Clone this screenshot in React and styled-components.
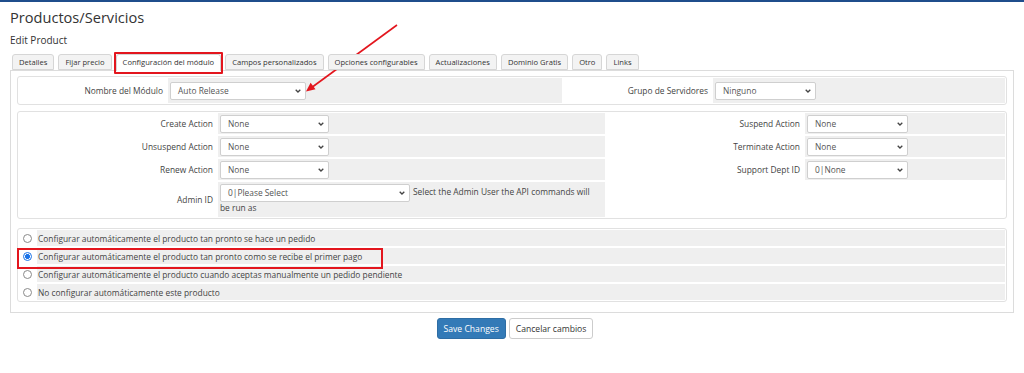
import styled, { createGlobalStyle } from "styled-components";

const GlobalStyle = createGlobalStyle`
  html, body {
    margin: 0;
    padding: 0;
    background: #fff;
  }
  body {
    font-family: "Open Sans", "Liberation Sans", sans-serif;
    color: #333;
  }
`;

const Page = styled.div`
  position: relative;
  width: 1024px;
  height: 373px;
  overflow: hidden;
  box-sizing: border-box;
  border-top: 2px solid #1f4d8c;
  padding: 0 10px;
`;

const Title = styled.h1`
  margin: 0;
  padding-top: 6px;
  font-size: 14.6px;
  font-weight: 400;
  line-height: 18px;
  color: #333;
`;

const SubTitle = styled.h2`
  margin: 7px 0 0;
  font-size: 10px;
  font-weight: 400;
  line-height: 14px;
  color: #333;
`;

const TabList = styled.div`
  display: flex;
  gap: 4px;
  margin-top: 7px;
  padding-left: 2px;
  height: 16px;
  align-items: flex-end;
`;

const Tab = styled.div`
  position: relative;
  box-sizing: border-box;
  height: ${(p) => (p.$active ? "17px" : "16px")};
  margin-bottom: ${(p) => (p.$active ? "-1px" : "0")};
  padding: 0 6px;
  border: 1px solid #d6d6d6;
  border-bottom: ${(p) => (p.$active ? "none" : "1px solid #d6d6d6")};
  border-radius: 3px 3px 0 0;
  background: ${(p) => (p.$active ? "#fff" : "#f3f3f3")};
  font-size: 7.6px;
  line-height: 15px;
  color: #333;
  white-space: nowrap;
  z-index: 1;
`;

const TabMark = styled.span`
  position: absolute;
  top: -3px;
  left: -3px;
  right: -3px;
  bottom: -3px;
  border: 2px solid #e3161e;
  border-radius: 1px;
`;

const Panel = styled.div`
  border: 1px solid #dcdcdc;
  padding: 5px 6px 10px;
`;

const FormBox = styled.div`
  position: relative;
  display: grid;
  grid-template-columns: ${(p) => p.$cols};
  grid-auto-rows: ${(p) => p.$row || "auto"};
  gap: 2px;
  border: 1px solid #e1e1e1;
  border-radius: 3px;
  padding: 1px;
  margin-top: ${(p) => p.$top || "0"};
`;

const Label = styled.div`
  display: flex;
  align-items: center;
  justify-content: flex-end;
  height: ${(p) => p.$h || "auto"};
  padding-right: 3px;
  background: #fff;
  font-size: 8.4px;
  color: #444;
  white-space: nowrap;
`;

const Field = styled.div`
  display: flex;
  align-items: ${(p) => (p.$wrap ? "flex-start" : "center")};
  padding: ${(p) => (p.$wrap ? "2px 2px 0" : "0 2px")};
  background: ${(p) => (p.$empty ? "#fff" : "#efefef")};
  font-size: 8.4px;
  color: #444;
`;

const WrapText = styled.div`
  line-height: 12px;
  font-size: 8.4px;
  color: #444;
`;

const SelectBox = styled.span`
  display: inline-flex;
  align-items: center;
  justify-content: space-between;
  box-sizing: border-box;
  width: ${(p) => p.$w}px;
  height: 18px;
  padding: 0 4px 0 7px;
  margin-right: 3px;
  border: 1px solid #cfcfcf;
  border-radius: 2px;
  background: #fff;
  font-size: 8.4px;
  color: #555;
  vertical-align: middle;
  white-space: nowrap;
`;

const Chevron = () => (
  <svg width="6" height="4" viewBox="0 0 6 4">
    <path d="M0.7 0.7 L3 3 L5.3 0.7" fill="none" stroke="#444" strokeWidth="1.3" />
  </svg>
);

const Select = ({ w, children }) => (
  <SelectBox $w={w}>
    {children}
    <Chevron />
  </SelectBox>
);

const RadioCell = styled.div`
  display: flex;
  align-items: center;
  justify-content: center;
  background: #fff;
`;

const Radio = styled.span`
  box-sizing: border-box;
  width: 9px;
  height: 9px;
  border-radius: 50%;
  border: 1px solid ${(p) => (p.$checked ? "#1a73e8" : "#8a8a8a")};
  background: ${(p) =>
    p.$checked
      ? "radial-gradient(circle, #1a73e8 0 2.2px, #fff 2.6px)"
      : "#fff"};
`;

const RadioText = styled.div`
  display: flex;
  align-items: center;
  padding-left: 1px;
  background: #efefef;
  font-size: 8.4px;
  color: #444;
  white-space: nowrap;
`;

const RowMark = styled.span`
  position: absolute;
  left: -1px;
  top: 19px;
  width: 366px;
  height: 21px;
  box-sizing: border-box;
  border: 2px solid #e3161e;
`;

const Actions = styled.div`
  display: flex;
  justify-content: center;
  gap: 3px;
  margin-top: 5px;
  padding-left: 6px;
`;

const Button = styled.button`
  box-sizing: border-box;
  height: 21px;
  padding: 0 6px;
  border-radius: 3px;
  border: 1px solid ${(p) => (p.$primary ? "#2e6da4" : "#cccccc")};
  background: ${(p) => (p.$primary ? "#337ab7" : "#fff")};
  color: ${(p) => (p.$primary ? "#fff" : "#333")};
  font-family: "Open Sans", "Liberation Sans", sans-serif;
  font-size: 8.6px;
`;

const Overlay = styled.svg`
  position: absolute;
  top: 0;
  left: 0;
  pointer-events: none;
`;

const tabs = [
  "Detalles",
  "Fijar precio",
  "Configuración del módulo",
  "Campos personalizados",
  "Opciones configurables",
  "Actualizaciones",
  "Dominio Gratis",
  "Otro",
  "Links",
];

const options = [
  "Configurar automáticamente el producto tan pronto se hace un pedido",
  "Configurar automáticamente el producto tan pronto como se recibe el primer pago",
  "Configurar automáticamente el producto cuando aceptas manualmente un pedido pendiente",
  "No configurar automáticamente este producto",
];

export default function App() {
  return (
    <>
      <GlobalStyle />
      <Page>
        <Title>Productos/Servicios</Title>
        <SubTitle>Edit Product</SubTitle>

        <TabList>
          {tabs.map((t, i) => (
            <Tab key={t} $active={i === 2}>
              {t}
              {i === 2 && <TabMark />}
            </Tab>
          ))}
        </TabList>

        <Panel>
          <FormBox $cols="147px 394px 147px 1fr" $row="25px">
            <Label>Nombre del Módulo</Label>
            <Field>
              <Select w={136}>Auto Release</Select>
            </Field>
            <Label>Grupo de Servidores</Label>
            <Field>
              <Select w={101}>Ninguno</Select>
            </Field>
          </FormBox>

          <FormBox $cols="197px 387px 196px 1fr" $top="6px">
            <Label $h="21px">Create Action</Label>
            <Field>
              <Select w={109}>None</Select>
            </Field>
            <Label>Suspend Action</Label>
            <Field>
              <Select w={101}>None</Select>
            </Field>

            <Label $h="21px">Unsuspend Action</Label>
            <Field>
              <Select w={109}>None</Select>
            </Field>
            <Label>Terminate Action</Label>
            <Field>
              <Select w={101}>None</Select>
            </Field>

            <Label $h="21px">Renew Action</Label>
            <Field>
              <Select w={109}>None</Select>
            </Field>
            <Label>Support Dept ID</Label>
            <Field>
              <Select w={101}>0|None</Select>
            </Field>

            <Label $h="35px">Admin ID</Label>
            <Field $wrap>
              <WrapText>
                <Select w={190}>0|Please Select</Select>
                <span>Select the Admin User the API commands will</span>
                <br />
                <span>be run as</span>
              </WrapText>
            </Field>
            <Label />
            <Field $empty />
          </FormBox>

          <FormBox $cols="16px 1fr" $row="16px" $top="9px">
            {options.map((o, i) => [
              <RadioCell key={"r" + i}>
                <Radio $checked={i === 1} />
              </RadioCell>,
              <RadioText key={"t" + i}>{o}</RadioText>,
            ])}
            <RowMark />
          </FormBox>
        </Panel>

        <Actions>
          <Button $primary>Save Changes</Button>
          <Button>Cancelar cambios</Button>
        </Actions>

        <Overlay width="1024" height="373">
          <line x1="397" y1="23" x2="311" y2="86" stroke="#e3161e" strokeWidth="1.6" />
          <polygon points="306,89.5 315.5,87.2 310.6,80.8" fill="#e3161e" />
        </Overlay>
      </Page>
    </>
  );
}
